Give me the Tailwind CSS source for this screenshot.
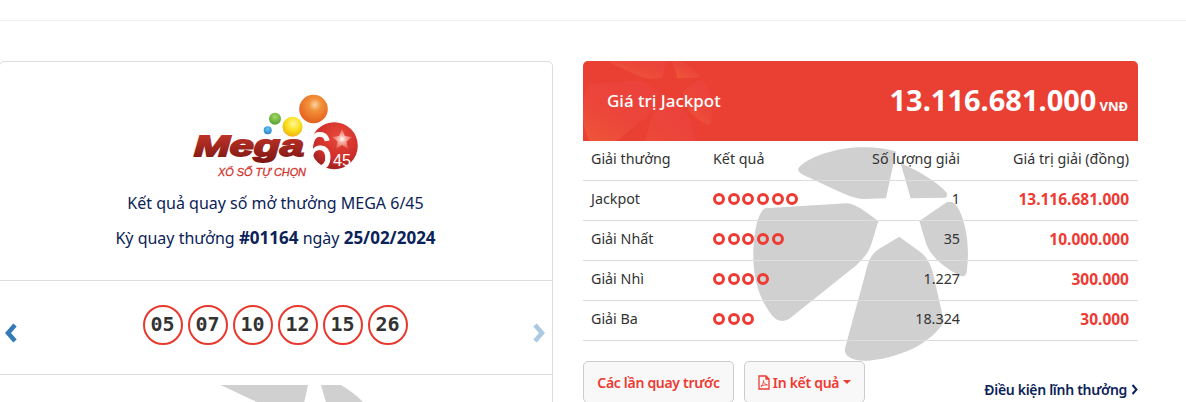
<!DOCTYPE html>
<html lang="en">

<head>
  <meta charset="UTF-8" />
  <title>Mega 6/45</title>
  <script src="https://cdn.jsdelivr.net/npm/@tailwindcss/browser@4"></script>
</head>

<body class="bg-white h-[402px] overflow-hidden font-['Noto_Sans',sans-serif] text-[#333]">
  <div class="h-[21px] border-b border-[#eee]"></div>

  <div class="flex items-start mt-10 pr-12 relative">
    <!-- left card -->
    <section class="-ml-px w-[554px] h-[360px] shrink-0 border border-[#ddd] rounded-[5px] overflow-hidden text-[#0b2258]">
      <div class="h-[219px] border-b border-[#ddd] flex flex-col items-center pr-[1px]">
        <svg class="mt-[29px] block" width="166" height="90" viewBox="0 0 166 90">
          <defs>
            <radialGradient id="orange" cx="0.55" cy="0.35" r="0.7">
              <stop offset="0" stop-color="#f9d6a8" />
              <stop offset="0.3" stop-color="#f3923a" />
              <stop offset="1" stop-color="#e2591b" />
            </radialGradient>
            <radialGradient id="yellow" cx="0.55" cy="0.35" r="0.7">
              <stop offset="0" stop-color="#fff79a" />
              <stop offset="0.5" stop-color="#fbe01c" />
              <stop offset="1" stop-color="#eda912" />
            </radialGradient>
            <radialGradient id="green" cx="0.5" cy="0.35" r="0.7">
              <stop offset="0" stop-color="#a5d864" />
              <stop offset="1" stop-color="#4c9c2c" />
            </radialGradient>
            <radialGradient id="blue" cx="0.5" cy="0.35" r="0.7">
              <stop offset="0" stop-color="#6cc6f2" />
              <stop offset="1" stop-color="#1b7cc4" />
            </radialGradient>
            <radialGradient id="red" cx="0.6" cy="0.3" r="0.8">
              <stop offset="0" stop-color="#e8483a" />
              <stop offset="0.6" stop-color="#cf2f2a" />
              <stop offset="1" stop-color="#8f1a1c" />
            </radialGradient>
            <radialGradient id="glow" cx="0.5" cy="0.5" r="0.5">
              <stop offset="0" stop-color="#ffffff" />
              <stop offset="0.35" stop-color="#f7b5a8" />
              <stop offset="1" stop-color="#e9594c" />
            </radialGradient>
            <linearGradient id="megaFill" x1="0" y1="0" x2="0" y2="1">
              <stop offset="0" stop-color="#c9392c" />
              <stop offset="1" stop-color="#7d1612" />
            </linearGradient>
          </defs>
          <circle cx="120.500" cy="18" r="14.300" fill="url(#orange)" />
          <circle cx="99.500" cy="35.700" r="10" fill="url(#yellow)" />
          <circle cx="82" cy="27.700" r="6" fill="url(#green)" />
          <circle cx="74.700" cy="39.300" r="4" fill="url(#blue)" />
          <circle cx="141.300" cy="54.700" r="23.500" fill="url(#red)" />
          <polygon points="149,38 152,45 159,46 153.500,50.500 155,58 149,54 143,58 144.500,50.500 139,46 146,45" fill="url(#glow)" />
          <text x="1" y="65" font-family="'Liberation Sans'" font-weight="700" font-style="italic" font-size="29" textLength="110" lengthAdjust="spacingAndGlyphs" fill="url(#megaFill)" stroke="url(#megaFill)" stroke-width="1.800">Mega</text>
          <text x="25" y="85" font-family="'Liberation Sans'" font-style="italic" font-size="11" textLength="88" lengthAdjust="spacingAndGlyphs" fill="#d0342c" stroke="#d0342c" stroke-width="0.300">XỔ SỐ TỰ CHỌN</text>
          <text x="113" y="78" font-family="'Liberation Sans'" font-size="52" textLength="26" lengthAdjust="spacingAndGlyphs" fill="#fff" stroke="#fff" stroke-width="1">6</text>
          <text x="140" y="75" font-family="'Liberation Sans'" font-size="16" textLength="18" lengthAdjust="spacingAndGlyphs" fill="#fff">45</text>
        </svg>
        <p class="mt-[10px] text-[16px] leading-[24px]">Kết quả quay số mở thưởng MEGA 6/45</p>
        <p class="mt-[11px] text-[16px] leading-[24px]">Kỳ quay thưởng <b class="text-[17px]">#01164</b> ngày <b class="text-[17px]">25/02/2024</b></p>
      </div>

      <div class="h-[94px] border-b border-[#ddd] relative flex justify-center pt-[24px] pr-[2px]">
        <div class="flex gap-[5px] h-10">
          <span class="w-10 h-10 pb-[2px] rounded-full border-2 border-[#e8392f] flex items-center justify-center font-['DejaVu_Sans_Mono',monospace] font-bold text-[20px] text-[#333]">05</span>
          <span class="w-10 h-10 pb-[2px] rounded-full border-2 border-[#e8392f] flex items-center justify-center font-['DejaVu_Sans_Mono',monospace] font-bold text-[20px] text-[#333]">07</span>
          <span class="w-10 h-10 pb-[2px] rounded-full border-2 border-[#e8392f] flex items-center justify-center font-['DejaVu_Sans_Mono',monospace] font-bold text-[20px] text-[#333]">10</span>
          <span class="w-10 h-10 pb-[2px] rounded-full border-2 border-[#e8392f] flex items-center justify-center font-['DejaVu_Sans_Mono',monospace] font-bold text-[20px] text-[#333]">12</span>
          <span class="w-10 h-10 pb-[2px] rounded-full border-2 border-[#e8392f] flex items-center justify-center font-['DejaVu_Sans_Mono',monospace] font-bold text-[20px] text-[#333]">15</span>
          <span class="w-10 h-10 pb-[2px] rounded-full border-2 border-[#e8392f] flex items-center justify-center font-['DejaVu_Sans_Mono',monospace] font-bold text-[20px] text-[#333]">26</span>
        </div>
        <svg class="absolute left-[4px] top-[42px]" width="14" height="20" viewBox="0 0 14 20"><path d="M11 2 L4 10 L11 18" fill="none" stroke="#337ab7" stroke-width="4.500" /></svg>
        <svg class="absolute right-[6px] top-[42px] opacity-40" width="14" height="20" viewBox="0 0 14 20"><path d="M3 2 L10 10 L3 18" fill="none" stroke="#337ab7" stroke-width="4.500" /></svg>
      </div>

      <div class="mt-[10px] h-10 relative overflow-hidden">
        <svg class="absolute left-[157px] top-[-35px]" width="230" height="240" viewBox="0 0 690 720" fill="#d0d0d0">
          <path d="M175 85 C200 50 300 20 370 22 C410 22 450 28 468 35 L438 175 L370 177 C330 175 290 150 190 105 C178 98 172 92 175 85 Z" />
          <path d="M482 70 C540 95 590 125 620 158 C624 168 620 173 610 173 L512 175 Z" />
        </svg>
      </div>
    </section>

    <!-- right column -->
    <section class="ml-[30px] w-[555px] shrink-0 relative">
      <svg class="absolute left-[157px] top-[79px]" width="230" height="240" viewBox="0 0 690 720" fill="#d0d0d0">
        <path d="M175 85 C200 50 300 20 370 22 C410 22 450 28 468 35 L438 175 L370 177 C330 175 290 150 190 105 C178 98 172 92 175 85 Z" />
        <path d="M482 70 C540 95 590 125 620 158 C624 168 620 173 610 173 L512 175 Z" />
        <path d="M75 205 L320 190 C350 192 375 215 415 243 L395 310 C385 340 370 355 350 375 L150 535 C130 548 110 545 95 525 C60 480 40 420 40 350 C40 290 50 220 75 205 Z" />
        <path d="M538 243 L620 187 C640 180 650 195 660 215 C680 260 690 330 680 395 C678 410 670 412 655 405 C600 375 565 340 555 300 Z" />
        <path d="M478 290 L540 335 C560 350 570 370 578 395 L612 545 C580 600 500 650 385 662 C340 665 310 650 315 625 L375 405 C385 360 395 340 420 325 Z" />
      </svg>

      <div class="relative h-[80px] rounded-t-[5px] bg-[#ea4034] overflow-hidden flex items-center justify-between pl-6 pr-[10px] text-white">
        <svg class="absolute left-[-8px] top-[-18px]" width="138" height="144" viewBox="0 0 690 720">
          <defs>
            <linearGradient id="headStar" x1="0" y1="1" x2="0.6" y2="0">
              <stop offset="0" stop-color="#f47a3a" stop-opacity="0.5" />
              <stop offset="0.6" stop-color="#f0564a" stop-opacity="0.25" />
              <stop offset="1" stop-color="#f0506a" stop-opacity="0.15" />
            </linearGradient>
          </defs>
          <g fill="url(#headStar)">
            <path d="M175 85 C200 50 300 20 370 22 C410 22 450 28 468 35 L438 175 L370 177 C330 175 290 150 190 105 C178 98 172 92 175 85 Z" />
            <path d="M482 70 C540 95 590 125 620 158 C624 168 620 173 610 173 L512 175 Z" />
            <path d="M75 205 L320 190 C350 192 375 215 415 243 L395 310 C385 340 370 355 350 375 L150 535 C130 548 110 545 95 525 C60 480 40 420 40 350 C40 290 50 220 75 205 Z" />
            <path d="M538 243 L620 187 C640 180 650 195 660 215 C680 260 690 330 680 395 C678 410 670 412 655 405 C600 375 565 340 555 300 Z" />
            <path d="M478 290 L540 335 C560 350 570 370 578 395 L612 545 C580 600 500 650 385 662 C340 665 310 650 315 625 L375 405 C385 360 395 340 420 325 Z" />
          </g>
        </svg>
        <span class="relative text-[17px] font-medium">Giá trị Jackpot</span>
        <span class="relative flex items-baseline gap-[3px]">
          <b class="text-[29px] leading-none">13.116.681.000</b>
          <b class="text-[13px]">VNĐ</b>
        </span>
      </div>

      <div class="relative text-[14.3px] leading-5 text-[#333]">
        <div class="grid grid-cols-[122px_130px_133px_170px] h-10 pb-[3px] items-center border-b border-[#ddd]">
          <span class="pl-2">Giải thưởng</span>
          <span class="pl-2">Kết quả</span>
          <span class="pr-2 text-right">Số lượng giải</span>
          <span class="pr-[9px] text-right">Giá trị giải (đồng)</span>
        </div>
        <div class="grid grid-cols-[122px_130px_133px_170px] h-10 pb-[3px] items-center border-b border-[#ddd]">
          <span class="pl-2">Jackpot</span>
          <span class="pl-2 flex gap-[2.7px]">
            <i class="w-3 h-3 rounded-full border-[3.5px] border-[#ee3a33]"></i><i class="w-3 h-3 rounded-full border-[3.5px] border-[#ee3a33]"></i><i class="w-3 h-3 rounded-full border-[3.5px] border-[#ee3a33]"></i><i class="w-3 h-3 rounded-full border-[3.5px] border-[#ee3a33]"></i><i class="w-3 h-3 rounded-full border-[3.5px] border-[#ee3a33]"></i><i class="w-3 h-3 rounded-full border-[3.5px] border-[#ee3a33]"></i>
          </span>
          <span class="pr-2 text-right">1</span>
          <span class="pr-[9px] text-right font-bold text-[15.5px] text-[#ee3a33]">13.116.681.000</span>
        </div>
        <div class="grid grid-cols-[122px_130px_133px_170px] h-10 pb-[3px] items-center border-b border-[#ddd]">
          <span class="pl-2">Giải Nhất</span>
          <span class="pl-2 flex gap-[2.7px]">
            <i class="w-3 h-3 rounded-full border-[3.5px] border-[#ee3a33]"></i><i class="w-3 h-3 rounded-full border-[3.5px] border-[#ee3a33]"></i><i class="w-3 h-3 rounded-full border-[3.5px] border-[#ee3a33]"></i><i class="w-3 h-3 rounded-full border-[3.5px] border-[#ee3a33]"></i><i class="w-3 h-3 rounded-full border-[3.5px] border-[#ee3a33]"></i>
          </span>
          <span class="pr-2 text-right">35</span>
          <span class="pr-[9px] text-right font-bold text-[15.5px] text-[#ee3a33]">10.000.000</span>
        </div>
        <div class="grid grid-cols-[122px_130px_133px_170px] h-10 pb-[3px] items-center border-b border-[#ddd]">
          <span class="pl-2">Giải Nhì</span>
          <span class="pl-2 flex gap-[2.7px]">
            <i class="w-3 h-3 rounded-full border-[3.5px] border-[#ee3a33]"></i><i class="w-3 h-3 rounded-full border-[3.5px] border-[#ee3a33]"></i><i class="w-3 h-3 rounded-full border-[3.5px] border-[#ee3a33]"></i><i class="w-3 h-3 rounded-full border-[3.5px] border-[#ee3a33]"></i>
          </span>
          <span class="pr-2 text-right">1.227</span>
          <span class="pr-[9px] text-right font-bold text-[15.5px] text-[#ee3a33]">300.000</span>
        </div>
        <div class="grid grid-cols-[122px_130px_133px_170px] h-10 pb-[3px] items-center border-b border-[#ddd]">
          <span class="pl-2">Giải Ba</span>
          <span class="pl-2 flex gap-[2.7px]">
            <i class="w-3 h-3 rounded-full border-[3.5px] border-[#ee3a33]"></i><i class="w-3 h-3 rounded-full border-[3.5px] border-[#ee3a33]"></i><i class="w-3 h-3 rounded-full border-[3.5px] border-[#ee3a33]"></i>
          </span>
          <span class="pr-2 text-right">18.324</span>
          <span class="pr-[9px] text-right font-bold text-[15.5px] text-[#ee3a33]">30.000</span>
        </div>
      </div>

      <div class="relative mt-5 flex items-start text-[14px] font-semibold tracking-[-0.3px]">
        <button class="w-[151px] h-[42px] rounded-[5px] border border-[#ccc] bg-[#f8f8f8] text-[#ee3a33]">Các lần quay trước</button>
        <button class="ml-[10px] w-[121px] h-[42px] rounded-[5px] border border-[#ccc] bg-[#f8f8f8] text-[#ee3a33] flex items-center justify-center gap-[3px]">
          <svg width="12" height="15" viewBox="0 0 12 15" fill="none" stroke="#ee3a33" stroke-width="1.300"><path d="M1 1 H8 L11 4 V14 H1 Z M8 1 V4 H11" /><path d="M3 11.500 C5 9 6 6.500 5.600 5.500 C5 6 6 9 9.500 10 C8 9.500 5 10 3 11.500 Z" stroke-width="0.900" /></svg>
          <span>In kết quả</span>
          <span class="ml-[1px] w-0 h-0 border-x-4 border-x-transparent border-t-4 border-t-[#ee3a33]"></span>
        </button>
        <a class="ml-auto mt-[18px] flex items-center gap-1 text-[#0b2258] font-semibold whitespace-nowrap">Điều kiện lĩnh thưởng
          <svg width="7" height="11" viewBox="0 0 7 11"><path d="M1.500 1 L5.500 5.500 L1.500 10" fill="none" stroke="#0b2258" stroke-width="2" /></svg>
        </a>
      </div>
    </section>
  </div>
</body>

</html>
